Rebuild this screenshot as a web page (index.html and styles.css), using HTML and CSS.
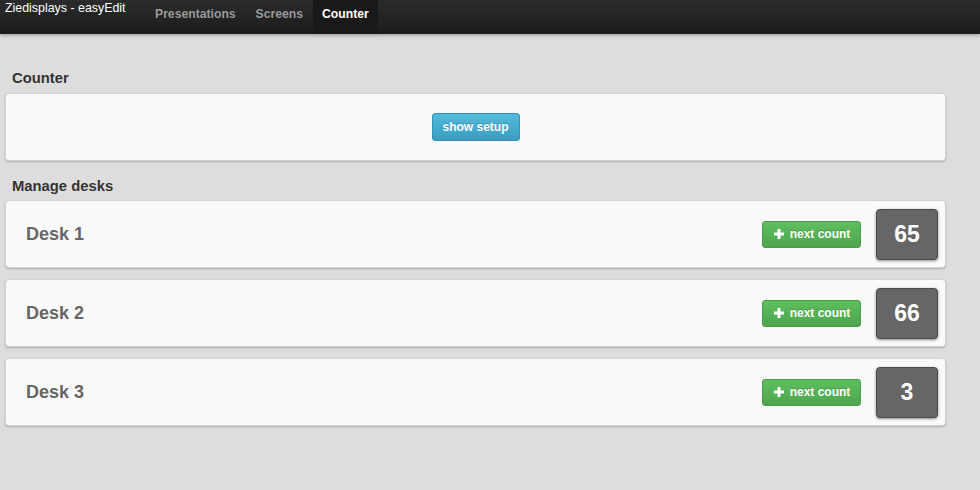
FILE: index.html
```html
<!DOCTYPE html>
<html>
<head>
<meta charset="utf-8">
<title>Counter</title>
<link rel="stylesheet" href="styles.css">
</head>
<body>
<header class="navbar">
  <span class="brand">Ziedisplays - easyEdit</span>
  <nav class="nav">
    <a class="nav-item">Presentations</a>
    <a class="nav-item">Screens</a>
    <a class="nav-item active">Counter</a>
  </nav>
</header>
<main class="content">
  <h2 class="section-title first">Counter</h2>
  <section class="panel setup">
    <button class="btn btn-info">show setup</button>
  </section>
  <h2 class="section-title">Manage desks</h2>
  <div class="desks">
    <section class="panel desk">
      <span class="desk-name">Desk 1</span>
      <button class="btn btn-success"><svg class="plus" viewBox="0 0 10 10"><path d="M3.5 0h3v3.5H10v3H6.5V10h-3V6.5H0v-3h3.5z"/></svg>next count</button>
      <span class="count">65</span>
    </section>
    <section class="panel desk">
      <span class="desk-name">Desk 2</span>
      <button class="btn btn-success"><svg class="plus" viewBox="0 0 10 10"><path d="M3.5 0h3v3.5H10v3H6.5V10h-3V6.5H0v-3h3.5z"/></svg>next count</button>
      <span class="count">66</span>
    </section>
    <section class="panel desk">
      <span class="desk-name">Desk 3</span>
      <button class="btn btn-success"><svg class="plus" viewBox="0 0 10 10"><path d="M3.5 0h3v3.5H10v3H6.5V10h-3V6.5H0v-3h3.5z"/></svg>next count</button>
      <span class="count">3</span>
    </section>
  </div>
</main>
</body>
</html>
```

FILE: styles.css
```css
* { box-sizing: border-box; }
html, body { margin: 0; padding: 0; }
body {
  background: #dddddd;
  font-family: "Liberation Sans", Arial, sans-serif;
  font-size: 13px;
  color: #333;
  height: 490px;
  overflow: hidden;
}
.navbar {
  height: 34px;
  background: linear-gradient(#2b2b2b, #1c1c1c);
  box-shadow: 0 1px 4px rgba(0,0,0,0.35);
  display: flex;
  align-items: stretch;
}
.brand {
  color: #fff;
  font-size: 12.4px;
  padding: 1px 0 0 5px;
  width: 145px;
  line-height: 14px;
}
.nav { display: flex; }
.nav-item {
  color: #999;
  font-weight: bold;
  font-size: 12.2px;
  padding: 0 10px 6px;
  display: flex;
  align-items: center;
  height: 34px;
}
.nav-item.active {
  color: #fff;
  background: #191919;
  padding: 0 9px 6px;
}
.content { padding: 0 34px 0 5px; }
.section-title {
  margin: 0;
  font-size: 14.8px;
  font-weight: bold;
  color: #333;
  padding-left: 7px;
  line-height: 20px;
}
.section-title.first { margin-top: 34px; margin-bottom: 5px; }
.section-title:not(.first) { margin-top: 15px; margin-bottom: 4px; }
.panel {
  background: #fafafa;
  border: 1px solid #d2d2d2;
  border-radius: 4px;
  box-shadow: 0 1px 2px rgba(0,0,0,0.22);
  height: 68px;
}
.setup {
  display: flex;
  align-items: center;
  justify-content: center;
}
.desks { display: flex; flex-direction: column; gap: 11px; }
.desk {
  display: flex;
  align-items: center;
  padding: 0 7px 0 20px;
}
.desk-name {
  font-size: 18px;
  font-weight: bold;
  color: #666;
  flex: 1;
}
.btn {
  font-family: inherit;
  font-weight: bold;
  font-size: 12px;
  color: #fff;
  border-radius: 3px;
  cursor: pointer;
  display: inline-flex;
  align-items: center;
  justify-content: center;
}
.btn-info {
  width: 88px;
  height: 28px;
  background: linear-gradient(#52bbdb, #3a9dc0);
  border: 1px solid #3492b4;
  text-shadow: 0 -1px 0 rgba(0,0,0,0.2);
}
.btn-success {
  width: 99px;
  height: 27px;
  background: linear-gradient(#5ebf5e, #4ea54e);
  border: 1px solid #4a9c4a;
  text-shadow: 0 -1px 0 rgba(0,0,0,0.2);
  padding: 0 0 0 1px;
  gap: 6px;
}
.plus { width: 10px; height: 10px; fill: #fff; }
.count {
  margin-left: 15px;
  width: 62px;
  height: 51px;
  background: #666;
  border: 1px solid #4a4a4a;
  border-radius: 4px;
  box-shadow: 0 1px 3px rgba(0,0,0,0.45);
  color: #fff;
  font-size: 23px;
  font-weight: bold;
  display: flex;
  align-items: center;
  justify-content: center;
}
```
